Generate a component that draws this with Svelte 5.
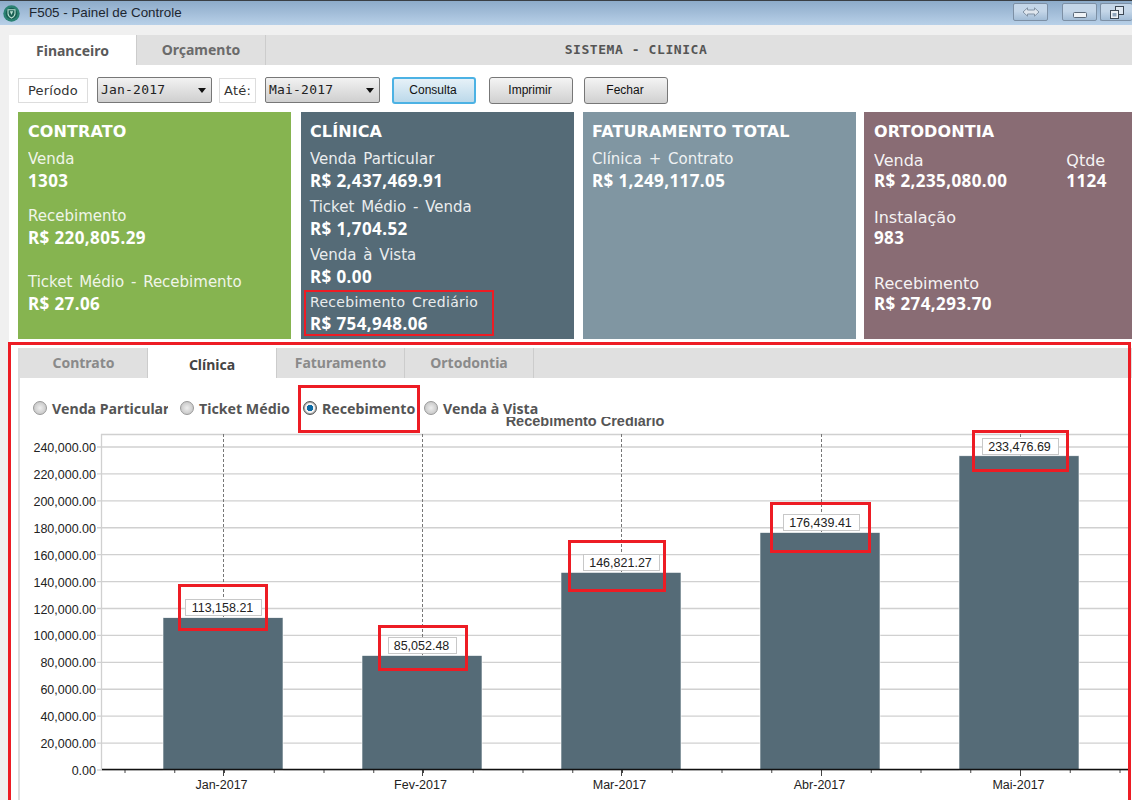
<script>
  const ticks = Array.from({ length: 13 }, (_, i) => i * 20000);
  const yOf = (v) => 770 - (v / 240000) * 323;
  const fmt = (v) => v.toLocaleString('en-US', { minimumFractionDigits: 2, maximumFractionDigits: 2 });
  const bars = [
    { name: 'Jan-2017', x: 163, cx: 223, value: 113158.21, label: '113,158.21', boxY: 599, boxW: 76, red: [178, 584, 90, 47] },
    { name: 'Fev-2017', x: 362, cx: 422, value: 85052.48, label: '85,052.48', boxY: 637, boxW: 68, red: [378, 625, 90, 46] },
    { name: 'Mar-2017', x: 561, cx: 621, value: 146821.27, label: '146,821.27', boxY: 554, boxW: 76, red: [568, 540, 98, 52] },
    { name: 'Abr-2017', x: 760, cx: 821, value: 176439.41, label: '176,439.41', boxY: 514, boxW: 76, red: [770, 502, 101, 51] },
    { name: 'Mai-2017', x: 959, cx: 1020, value: 233476.69, label: '233,476.69', boxY: 438, boxW: 76, red: [972, 430, 97, 42] }
  ];
  const minorTicks = Array.from({ length: 21 }, (_, i) => 125 + i * 49.75);
  const radios = [
    { label: 'Venda Particular', w: 135, mr: 12 },
    { label: 'Ticket Médio', w: 123, mr: 0 },
    { label: 'Recebimento', w: 121, mr: 0, on: true },
    { label: 'Venda à Vista', w: 125, mr: 0 }
  ];
</script>

<div class="window">
  <header class="titlebar">
    <svg class="logo" width="17" height="17" viewBox="0 0 17 17">
      <circle cx="8.5" cy="8.5" r="8.2" fill="#2b8272" />
      <circle cx="8.5" cy="8.5" r="5.8" fill="#1a5f53" />
      <path d="M5 4.8h7v3.6c0 2.4-1.7 3.6-3.5 4.6C6.700 12 5 10.800 5 8.400z" fill="none" stroke="#b9e0d2" stroke-width="1.100" />
      <path d="M6.800 6.300h3.400L8.500 10z" fill="#b9e0d2" />
    </svg>
    <span class="wintitle">F505 - Painel de Controle</span>
    <div class="winbtns">
      <button class="wb wide" aria-label="Redimensionar">
        <svg width="18" height="10" viewBox="0 0 18 10"><path d="M5.500 .8 1 5l4.500 4.200V7h7v2.200L17 5 12.500 .8V3h-7z" fill="#dfe6ee" stroke="#8394a6" /></svg>
      </button>
      <button class="wb min" aria-label="Minimizar">
        <svg width="14" height="6" viewBox="0 0 14 6"><rect x=".5" y=".5" width="13" height="5" rx="1" fill="#eef2f6" stroke="#5a6878" /></svg>
      </button>
      <button class="wb last" aria-label="Restaurar">
        <svg width="14" height="13" viewBox="0 0 14 13"><rect x="5.500" y=".5" width="8" height="8" fill="#dfe8f1" stroke="#3d4854" /><rect x=".5" y="4.500" width="8" height="8" fill="#eef2f6" stroke="#3d4854" /><rect x="2.500" y="7" width="4" height="3.500" fill="#8fa5bb" /></svg>
      </button>
    </div>
  </header>

  <nav class="maintabs">
    <div class="mtab active">Financeiro</div>
    <div class="mtab second">Orçamento</div>
    <div class="systitle">SISTEMA - CLINICA</div>
  </nav>

  <main class="content">
    <div class="toolbar">
      <span class="tag periodo">Período</span>
      <div class="select">Jan-2017<i></i></div>
      <span class="tag ate">Até:</span>
      <div class="select">Mai-2017<i></i></div>
      <button class="btn primary">Consulta</button>
      <button class="btn">Imprimir</button>
      <button class="btn fechar">Fechar</button>
    </div>

    <section class="cards">
      <article class="card green">
        <h2>CONTRATO</h2>
        <p class="lbl l1">Venda</p><p class="val">1303</p>
        <p class="lbl l2">Recebimento</p><p class="val">R$ 220,805.29</p>
        <p class="lbl l3">Ticket Médio - Recebimento</p><p class="val">R$ 27.06</p>
      </article>
      <article class="card slate">
        <h2>CLÍNICA</h2>
        <p class="lbl l1">Venda Particular</p><p class="val">R$ 2,437,469.91</p>
        <p class="lbl c2">Ticket Médio - Venda</p><p class="val">R$ 1,704.52</p>
        <p class="lbl c2">Venda à Vista</p><p class="val">R$ 0.00</p>
        <p class="lbl c3">Recebimento Crediário</p><p class="val">R$ 754,948.06</p>
        <span class="redbox cardmark"></span>
      </article>
      <article class="card steel">
        <h2>FATURAMENTO TOTAL</h2>
        <p class="lbl l1">Clínica + Contrato</p><p class="val">R$ 1,249,117.05</p>
      </article>
      <article class="card mauve">
        <h2>ORTODONTIA</h2>
        <div class="pair">
          <div><p class="lbl big o1">Venda</p><p class="val tight">R$ 2,235,080.00</p></div>
          <div class="qtd"><p class="lbl big o1">Qtde</p><p class="val tight">1124</p></div>
        </div>
        <p class="lbl big o2">Instalação</p><p class="val tight">983</p>
        <p class="lbl big o3">Recebimento</p><p class="val tight">R$ 274,293.70</p>
      </article>
    </section>

    <section class="panel">
      <div class="subtabs">
        <div class="stab w1">Contrato</div>
        <div class="stab w2 active">Clínica</div>
        <div class="stab w3">Faturamento</div>
        <div class="stab w4">Ortodontia</div>
      </div>
      <div class="radios">
        {#each radios as r}
          <div class="radio" style="width:{r.w}px;margin-right:{r.mr}px">
            <span class="dot" class:on={r.on}></span><span class="rlabel">{r.label}</span>
          </div>
        {/each}
        <span class="redbox radiomark"></span>
      </div>
      <svg class="chart" width="1132" height="383" viewBox="0 417 1132 383">
        <text x="585" y="426" class="ctitle" text-anchor="middle">Recebimento Crediário</text>
        <line x1="101.5" y1="434" x2="101.5" y2="770" class="grid" />
        <line x1="101" y1="434.5" x2="1128" y2="434.5" class="grid" />
        {#each ticks as t}
          <line x1="97" y1={yOf(t)} x2="1128" y2={yOf(t)} class="grid" />
          <text x="96" y={yOf(t) + 5} text-anchor="end" class="axis">{fmt(t)}</text>
        {/each}
        {#each bars as b}
          <line x1={b.cx + 0.5} y1="434" x2={b.cx + 0.5} y2={yOf(b.value)} class="dash" />
          <rect x={b.x} y={yOf(b.value)} width="120" height={770 - yOf(b.value)} class="bar" />
          <rect x={b.cx - b.boxW / 2 + 0.5} y={b.boxY + 0.5} width={b.boxW} height="16" class="lblbox" />
          <text x={b.cx - 0.5} y={b.boxY + 13} text-anchor="middle" class="axis">{b.label}</text>
          <rect x={b.red[0] + 1.5} y={b.red[1] + 1.5} width={b.red[2] - 3} height={b.red[3] - 3} class="redrect" />
          <line x1={b.cx + 0.5} y1="770" x2={b.cx + 0.5} y2="776" class="tick" />
          <text x={b.cx - 1.5} y="789" text-anchor="middle" class="axis">{b.name}</text>
        {/each}
        {#each minorTicks as m}
          <line x1={m} y1="770" x2={m} y2="773" class="tick" />
        {/each}
        <line x1="102" y1="769.5" x2="1128" y2="769.5" class="base" />
      </svg>
    </section>
    <span class="outer"></span>
  </main>
</div>

<style>
  :global(body) { margin: 0; background: #f0f0f0; }
  .window { position: relative; width: 1132px; height: 800px; overflow: hidden; font-family: "DejaVu Sans", sans-serif; background: #f0f0f0; }
  .titlebar { height: 25px; box-sizing: border-box; border-top: 1px solid #3a3f44; display: flex; align-items: center; padding: 0 0 0 3px; background: linear-gradient(#8dabc9, #b8d0e8); color: #1c2630; }
  .logo { flex: none; }
  .wintitle { margin: -2px 0 0 9px; font: 13.4px "Liberation Sans", sans-serif; }
  .winbtns { margin-left: auto; display: flex; align-items: center; margin-top: -2px; }
  .wb { width: 35px; height: 18px; padding: 0; display: flex; align-items: center; justify-content: center; border: 1px solid #7d90a5; border-radius: 2px; background: linear-gradient(#c4d6e8 45%, #a2bcd6); }
  .wb.wide { margin-right: 14px; }
  .wb.min svg { margin-top: 5px; }
  .wb.last { margin-left: 3px; width: 32px; border-right: 0; justify-content: flex-start; padding-left: 9px; }
  .maintabs { display: flex; margin: 10px 0 0 9px; height: 30px; background: #e0e0e0; color: #6b6b6b; font-family: "Noto Sans", sans-serif; font-size: 14px; font-weight: 700; }
  .mtab { width: 128px; text-align: center; line-height: 30px; border-right: 1px solid #ccc; box-sizing: border-box; }
  .mtab.second { width: 129px; }
  .mtab.active { background: #fff; color: #5a5a5a; line-height: 32px; }
  .systitle { flex: 1; text-align: center; font: 700 13px/30px "DejaVu Sans Mono", monospace; letter-spacing: .57px; color: #555; padding-right: 126px; }
  .content { background: #fff; margin-left: 9px; height: 735px; }
  .toolbar { display: flex; align-items: center; box-sizing: border-box; height: 47px; padding: 3px 0 0 9px; font-size: 13px; color: #333; }
  .tag { height: 25px; box-sizing: border-box; border: 1px solid #ddd; background: #fff; display: flex; align-items: center; justify-content: center; letter-spacing: .2px; }
  .periodo { width: 70px; }
  .ate { width: 37px; margin: 0 9px 0 7px; }
  .select { position: relative; width: 115px; height: 26px; box-sizing: border-box; border: 1px solid #777; border-radius: 2px; background: linear-gradient(#f2f2f2, #cfcfcf); font: 13px/24px "DejaVu Sans Mono", monospace; letter-spacing: .2px; padding-left: 3px; color: #222; }
  .periodo + .select { margin-left: 9px; }
  .select i { position: absolute; right: 5px; top: 10px; border: 4px solid transparent; border-top: 5px solid #111; border-bottom: 0; }
  .btn { width: 84px; height: 27px; padding: 0 2px 0 0; border: 1px solid #777; border-radius: 3px; background: linear-gradient(#f4f4f4, #d0d0d0); font: 12px "Liberation Sans", sans-serif; color: #111; margin-left: 13px; }
  .btn.primary { margin-left: 12px; border: 2px solid #4cb2e4; background: linear-gradient(#e6f1f8, #bcd9ea); }
  .btn.fechar { margin-left: 11px; }
  .cards { display: flex; gap: 10px; padding: 0 0 0 9px; height: 227px; }
  .card { position: relative; box-sizing: border-box; height: 227px; padding: 10px 9px 0 10px; color: #fff; flex: none; font-family: "DejaVu Sans", sans-serif; }
  .card:nth-child(1) { width: 273px; }
  .card:nth-child(2) { width: 273px; margin-right: -1px; padding-left: 9px; }
  .card:nth-child(3) { width: 273px; margin-right: -2px; padding-left: 9px; }
  .card:nth-child(4) { width: 280px; padding-left: 10px; }
  .green { background: #86b450; }
  .slate { background: #556b77; }
  .steel { background: #8096a2; }
  .mauve { background: #896c74; }
  h2 { margin: 0; font-size: 16px; line-height: 20px; font-weight: 700; letter-spacing: .1px; }
  p { margin: 0; }
  .lbl { font-size: 15px; line-height: 18px; opacity: .88; word-spacing: 2px; }
  .lbl.big { font-size: 16px; opacity: .92; }
  .val { font-family: "Noto Sans", sans-serif; font-size: 17px; font-weight: 700; line-height: 22px; margin-top: 2px; letter-spacing: .4px; }
  .val.tight { margin-top: 0; }
  .l1 { margin-top: 8px; }
  .l2 { margin-top: 15px; }
  .l3 { margin-top: 24px; }
  .c2 { margin-top: 6px; }
  .c3 { margin-top: 5px; font-size: 14px; letter-spacing: .3px; }
  .pair { display: flex; }
  .qtd { margin-left: 59px; }
  .o1 { margin-top: 10px; }
  .o2 { margin-top: 17px; }
  .o3 { margin-top: 26px; }
  .redbox { position: absolute; border: 3px solid #ed1c24; box-sizing: border-box; pointer-events: none; }
  .cardmark { left: 3px; top: 178px; width: 190px; height: 46px; border-width: 2px; }
  .panel { margin: 9px 0 0 9px; border-left: 2px solid #ddd; position: relative; }
  .subtabs { display: flex; height: 30px; background: #e0e0e0; font-family: "Noto Sans", sans-serif; font-size: 14px; font-weight: 700; color: #8a8a8a; }
  .stab { text-align: center; line-height: 30px; box-sizing: border-box; border-right: 1px solid #ccc; }
  .w1 { width: 128px; } .w2 { width: 129px; } .w3 { width: 128px; } .w4 { width: 129px; }
  .stab.active { background: #fff; color: #444; line-height: 33px; }
  .radios { position: relative; z-index: 2; display: flex; align-items: center; box-sizing: border-box; height: 39px; padding: 21px 0 0 13px; background: #fff; font-family: "Noto Sans", sans-serif; font-size: 14.2px; font-weight: 700; color: #555; }
  .radio { display: flex; align-items: center; gap: 5px; height: 20px; white-space: nowrap; overflow: hidden; flex: none; }
  .dot { width: 14px; height: 14px; box-sizing: border-box; flex: none; border-radius: 50%; border: 1px solid #999; background: radial-gradient(#eee, #bbb); }
  .dot.on { background: radial-gradient(#0a6aa5 0 3px, #f4f4f4 3.5px 4.5px, #aaa 5.5px); border-color: #555; }
  .radiomark { left: 278px; top: 7px; width: 122px; height: 48px; z-index: 3; }
  .chart { display: block; margin-left: -20px; }
  .ctitle { font: 700 14.5px "Liberation Sans", sans-serif; fill: #555; }
  .axis { font: 12.5px "Liberation Sans", sans-serif; fill: #222; }
  .grid { stroke: #d0d0d0; stroke-width: 1.3; }
  .dash { stroke: #777; stroke-dasharray: 3 2; }
  .bar { fill: #556b77; stroke: #fff; stroke-width: .6; }
  .lblbox { fill: #fff; stroke: #c8c8c8; }
  .redrect { fill: none; stroke: #ed1c24; stroke-width: 3; }
  .tick { stroke: #444; }
  .base { stroke: #111; stroke-width: 1.5; }
  .outer { position: absolute; z-index: 4; left: 8px; top: 342px; width: 1123px; height: 470px; box-sizing: border-box; border: 3px solid #ed1c24; pointer-events: none; }
</style>
